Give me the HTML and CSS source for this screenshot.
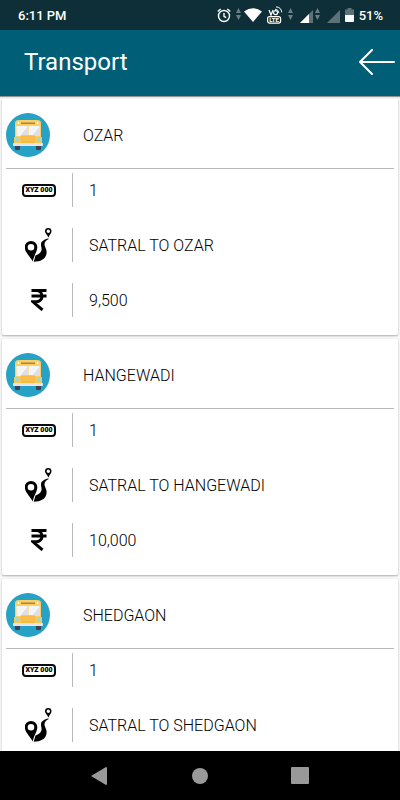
FILE: index.html
```html
<!DOCTYPE html>
<html lang="en">
  <head>
    <title>Transport</title>
    <meta charset="UTF-8" />
    <meta name="viewport" content="width=device-width, initial-scale=1.0" />
    <link rel="stylesheet" href="styles.css" />
  </head>
  <body>
    <!-- Shared icons -->
    <svg class="sprite" aria-hidden="true">
      <symbol id="bus" viewBox="0 0 44 44">
        <circle cx="22" cy="22" r="22" fill="#27a2c5" />
        <rect x="9" y="31" width="5" height="6" rx="1" fill="#3c4350" />
        <rect x="30" y="31" width="5" height="6" rx="1" fill="#3c4350" />
        <path d="M9 10q0-3 4-3h18q4 0 4 3v22H9z" fill="#fdcf63" />
        <rect x="15" y="9.500" width="14" height="1.500" fill="#a58645" />
        <circle cx="12.500" cy="10" r="1" fill="#fff" />
        <circle cx="31.500" cy="10" r="1" fill="#fff" />
        <path d="M10.500 13h11v10h-11zM22.500 13h11v10h-11z" fill="#f4f5f8" />
        <path d="M14 23l7.500-9v9zM26 23l7.500-9v9z" fill="#dddee7" />
        <path d="M8 24h6l2-2h12l2 2h6v7H8z" fill="#fdc754" />
        <rect x="15" y="23" width="14" height="7" rx="1" fill="#f8b945" />
        <path d="M16 25h12M16 27h12" stroke="#fdcf63" stroke-width=".5" />
        <circle cx="11" cy="26.500" r="1.800" fill="#8fdcf2" />
        <circle cx="33" cy="26.500" r="1.800" fill="#8fdcf2" />
        <rect x="7" y="30" width="30" height="3" rx="1" fill="#e4e6ee" />
      </symbol>
      <symbol id="route" viewBox="0 0 28 34">
        <path fill-rule="evenodd" d="M6 13a6.300 6.300 0 0 1 6.300 6.300c0 4.200-3.300 7.700-4.500 14.200C5 28.500-.3 24-.3 19.300A6.300 6.300 0 0 1 6 13zm0 3a3.300 3.300 0 1 0 0 6.600A3.300 3.300 0 0 0 6 16z" />
        <path fill-rule="evenodd" d="M23.300 0a3.300 3.300 0 0 1 3.200 3.300c0 2-2 3.200-3 6.200-1.400-3-3.500-4.200-3.500-6.200A3.300 3.300 0 0 1 23.300 0zm0 1.500a1.700 1.700 0 1 0 0 3.400 1.700 1.700 0 0 0 0-3.400z" />
        <path d="M23 10.500c-3 .8-7 2.500-7 5.700 0 3 1.200 4.300.2 6.800-1.200 2.700-3.700 3.500-5.700 4.500L8.700 33.700c7 0 12.300-2.700 12.900-8.700.4-4-2.300-6-2.100-9 .2-2.500 2-4 4.500-5z" />
      </symbol>
      <symbol id="rupee" viewBox="0 0 16 22">
        <path d="M.5 1.500h15M.5 7h15M.5 1.500H5c8 0 8 11.300 0 11.300H2l9.500 8.200" fill="none" stroke="#000" stroke-width="3" />
      </symbol>
      <symbol id="updown" viewBox="0 0 5 12">
        <path d="M2.500 0L5 5H0zM2.500 12L0 7h5z" fill="#6c7f84" />
      </symbol>
    </svg>

    <div class="status-bar">
      <span class="clock">6:11 PM</span>
      <div class="status-icons">
        <svg width="14" height="15" viewBox="0 0 14 15" fill="none" stroke="#fff" stroke-width="1.400">
          <circle cx="7" cy="8" r="5.500" />
          <path d="M7 5v3.300l2.200 1.400M.7 3.500L3.700 1M13.300 3.500l-3-2.500" />
        </svg>
        <svg class="arrows" width="5" height="12"><use href="#updown" /></svg>
        <svg class="wifi" width="18" height="14" viewBox="0 0 18 14">
          <path d="M0 3.500Q9-3 18 3.500L9 14z" fill="#fff" />
        </svg>
        <svg width="16" height="18" viewBox="0 0 16 18" fill="none" stroke="#fff">
          <path d="M2 4l2 5 2-5" stroke-width="1.300" />
          <circle cx="8.500" cy="6.700" r="2" stroke-width="1.200" />
          <path d="M8 3.200q3.500 0 4 4M9 .9q5 0 5.800 5.500" />
          <rect x=".6" y="10.600" width="13" height="6.500" rx="2" stroke-width="1.200" />
          <text x="7" y="16" text-anchor="middle" class="lte-text">LTE</text>
        </svg>
        <svg class="arrows" width="5" height="12"><use href="#updown" /></svg>
        <svg class="signal" width="13" height="14" viewBox="0 0 13 14">
          <path d="M0 14L13 1v13z" fill="#5c7277" />
          <path d="M0 14l9-9v9z" fill="#fff" />
        </svg>
        <svg class="arrows arrows-near" width="5" height="12"><use href="#updown" /></svg>
        <svg class="signal" width="13" height="14" viewBox="0 0 13 14">
          <path d="M0 14L13 1v13z" fill="#5c7277" />
        </svg>
        <svg width="9" height="14" viewBox="0 0 9 14">
          <path d="M2.500 0h4v1.500H9V8H0V1.500h2.500z" fill="#5c7277" />
          <path d="M0 7h9v6q0 1-1 1H1q-1 0-1-1z" fill="#fff" />
        </svg>
        <span>51%</span>
      </div>
    </div>

    <header class="app-bar">
      <h1>Transport</h1>
      <button class="back" aria-label="Back">
        <svg width="36" height="26" viewBox="0 0 36 26" fill="none" stroke="#fff" stroke-width="2" stroke-linecap="round" stroke-linejoin="round">
          <path d="M35 13H1M13 1L1 13l12 12" />
        </svg>
      </button>
    </header>

    <main class="routes">
      <section class="card">
        <div class="card-head">
          <svg class="bus"><use href="#bus" /></svg>
          <h2>OZAR</h2>
        </div>
        <div class="card-body">
          <div class="row">
            <span class="icon"><span class="plate">XYZ 000</span></span>
            <p>1</p>
          </div>
          <div class="row">
            <span class="icon"><svg width="28" height="34"><use href="#route" /></svg></span>
            <p>SATRAL TO OZAR</p>
          </div>
          <div class="row">
            <span class="icon"><svg width="16" height="22"><use href="#rupee" /></svg></span>
            <p>9,500</p>
          </div>
        </div>
      </section>

      <section class="card">
        <div class="card-head">
          <svg class="bus"><use href="#bus" /></svg>
          <h2>HANGEWADI</h2>
        </div>
        <div class="card-body">
          <div class="row">
            <span class="icon"><span class="plate">XYZ 000</span></span>
            <p>1</p>
          </div>
          <div class="row">
            <span class="icon"><svg width="28" height="34"><use href="#route" /></svg></span>
            <p>SATRAL TO HANGEWADI</p>
          </div>
          <div class="row">
            <span class="icon"><svg width="16" height="22"><use href="#rupee" /></svg></span>
            <p>10,000</p>
          </div>
        </div>
      </section>

      <section class="card">
        <div class="card-head">
          <svg class="bus"><use href="#bus" /></svg>
          <h2>SHEDGAON</h2>
        </div>
        <div class="card-body">
          <div class="row">
            <span class="icon"><span class="plate">XYZ 000</span></span>
            <p>1</p>
          </div>
          <div class="row">
            <span class="icon"><svg width="28" height="34"><use href="#route" /></svg></span>
            <p>SATRAL TO SHEDGAON</p>
          </div>
        </div>
      </section>
    </main>

    <nav class="nav-bar">
      <button aria-label="Back">
        <svg width="18" height="18" viewBox="0 0 18 18"><path d="M0 9L15 0q1 0 1 1v16q0 1-1 1z" fill="#999" /></svg>
      </button>
      <button aria-label="Home">
        <svg width="18" height="18" viewBox="0 0 18 18"><circle cx="9" cy="9" r="8" fill="#999" /></svg>
      </button>
      <button aria-label="Recent apps">
        <svg width="18" height="18" viewBox="0 0 18 18"><rect width="18" height="17" rx="1" fill="#999" /></svg>
      </button>
    </nav>
  </body>
</html>
```
FILE: styles.css
```css
* {
  box-sizing: border-box;
  margin: 0;
  padding: 0;
}
body {
  font-family: Roboto, "Liberation Sans", sans-serif;
  background: #f7f7f7;
  color: #000;
  display: flex;
  flex-direction: column;
  height: 100vh;
  overflow: hidden;
}
button {
  background: none;
  border: none;
  cursor: pointer;
}
svg {
  display: block;
}
.sprite {
  position: absolute;
  width: 0;
  height: 0;
}
.status-bar {
  flex: none;
  display: flex;
  justify-content: space-between;
  align-items: center;
  height: 30px;
  padding: 0 17px 0 18px;
  background: #0e2f38;
  color: #fff;
  font-size: 13px;
  font-weight: 500;
}
.status-icons {
  display: flex;
  align-items: center;
  gap: 5px;
}
.arrows {
  margin-bottom: 3px;
}
.wifi {
  margin-left: -2px;
}
.signal {
  margin: 2px 0 0 2px;
}
.arrows-near {
  margin-left: -3px;
}
.lte-text {
  font: bold 6px Roboto, sans-serif;
  fill: #fff;
  stroke: none;
}
.app-bar {
  flex: none;
  display: flex;
  justify-content: space-between;
  align-items: center;
  height: 66px;
  padding: 0 5px 2px 24px;
  background: #005e77;
  color: #fff;
  box-shadow: 0 1px 1px rgba(0, 0, 0, 0.4);
}
.app-bar h1 {
  font-size: 24px;
  font-weight: 400;
}
.routes {
  flex: 1;
  display: flex;
  flex-direction: column;
  gap: 4px;
  padding: 3px 2px 0;
  overflow: hidden;
}
.card {
  flex: none;
  padding: 0 4px;
  background: #fff;
  border-radius: 2px;
  box-shadow: 0 1px 2px rgba(0, 0, 0, 0.3);
}
.card-head {
  display: flex;
  align-items: center;
  gap: 33px;
  padding: 14px 0 11px;
  border-bottom: 1px solid #b8b8b8;
}
.card-head h2 {
  padding-top: 1px;
  font-size: 16px;
  font-weight: 300;
}
.bus {
  width: 44px;
  height: 44px;
}
.card-body {
  display: flex;
  flex-direction: column;
  gap: 21px;
  padding: 4px 0 18px;
}
.row {
  display: flex;
  height: 34px;
}
.icon {
  flex: 0 0 66px;
  display: flex;
  justify-content: center;
  align-items: center;
}
.plate {
  width: 34px;
  border: 2px solid #0a0a0a;
  border-radius: 4px;
  font-size: 7px;
  font-weight: 900;
  line-height: 9px;
  text-align: center;
  white-space: nowrap;
}
.row p {
  flex: 1;
  padding: 1px 0 0 16px;
  border-left: 1px solid #b8b8b8;
  font-size: 16px;
  font-weight: 300;
  line-height: 34px;
}
.nav-bar {
  flex: none;
  display: flex;
  justify-content: center;
  align-items: center;
  gap: 82px;
  height: 49px;
  background: #000;
}
```
